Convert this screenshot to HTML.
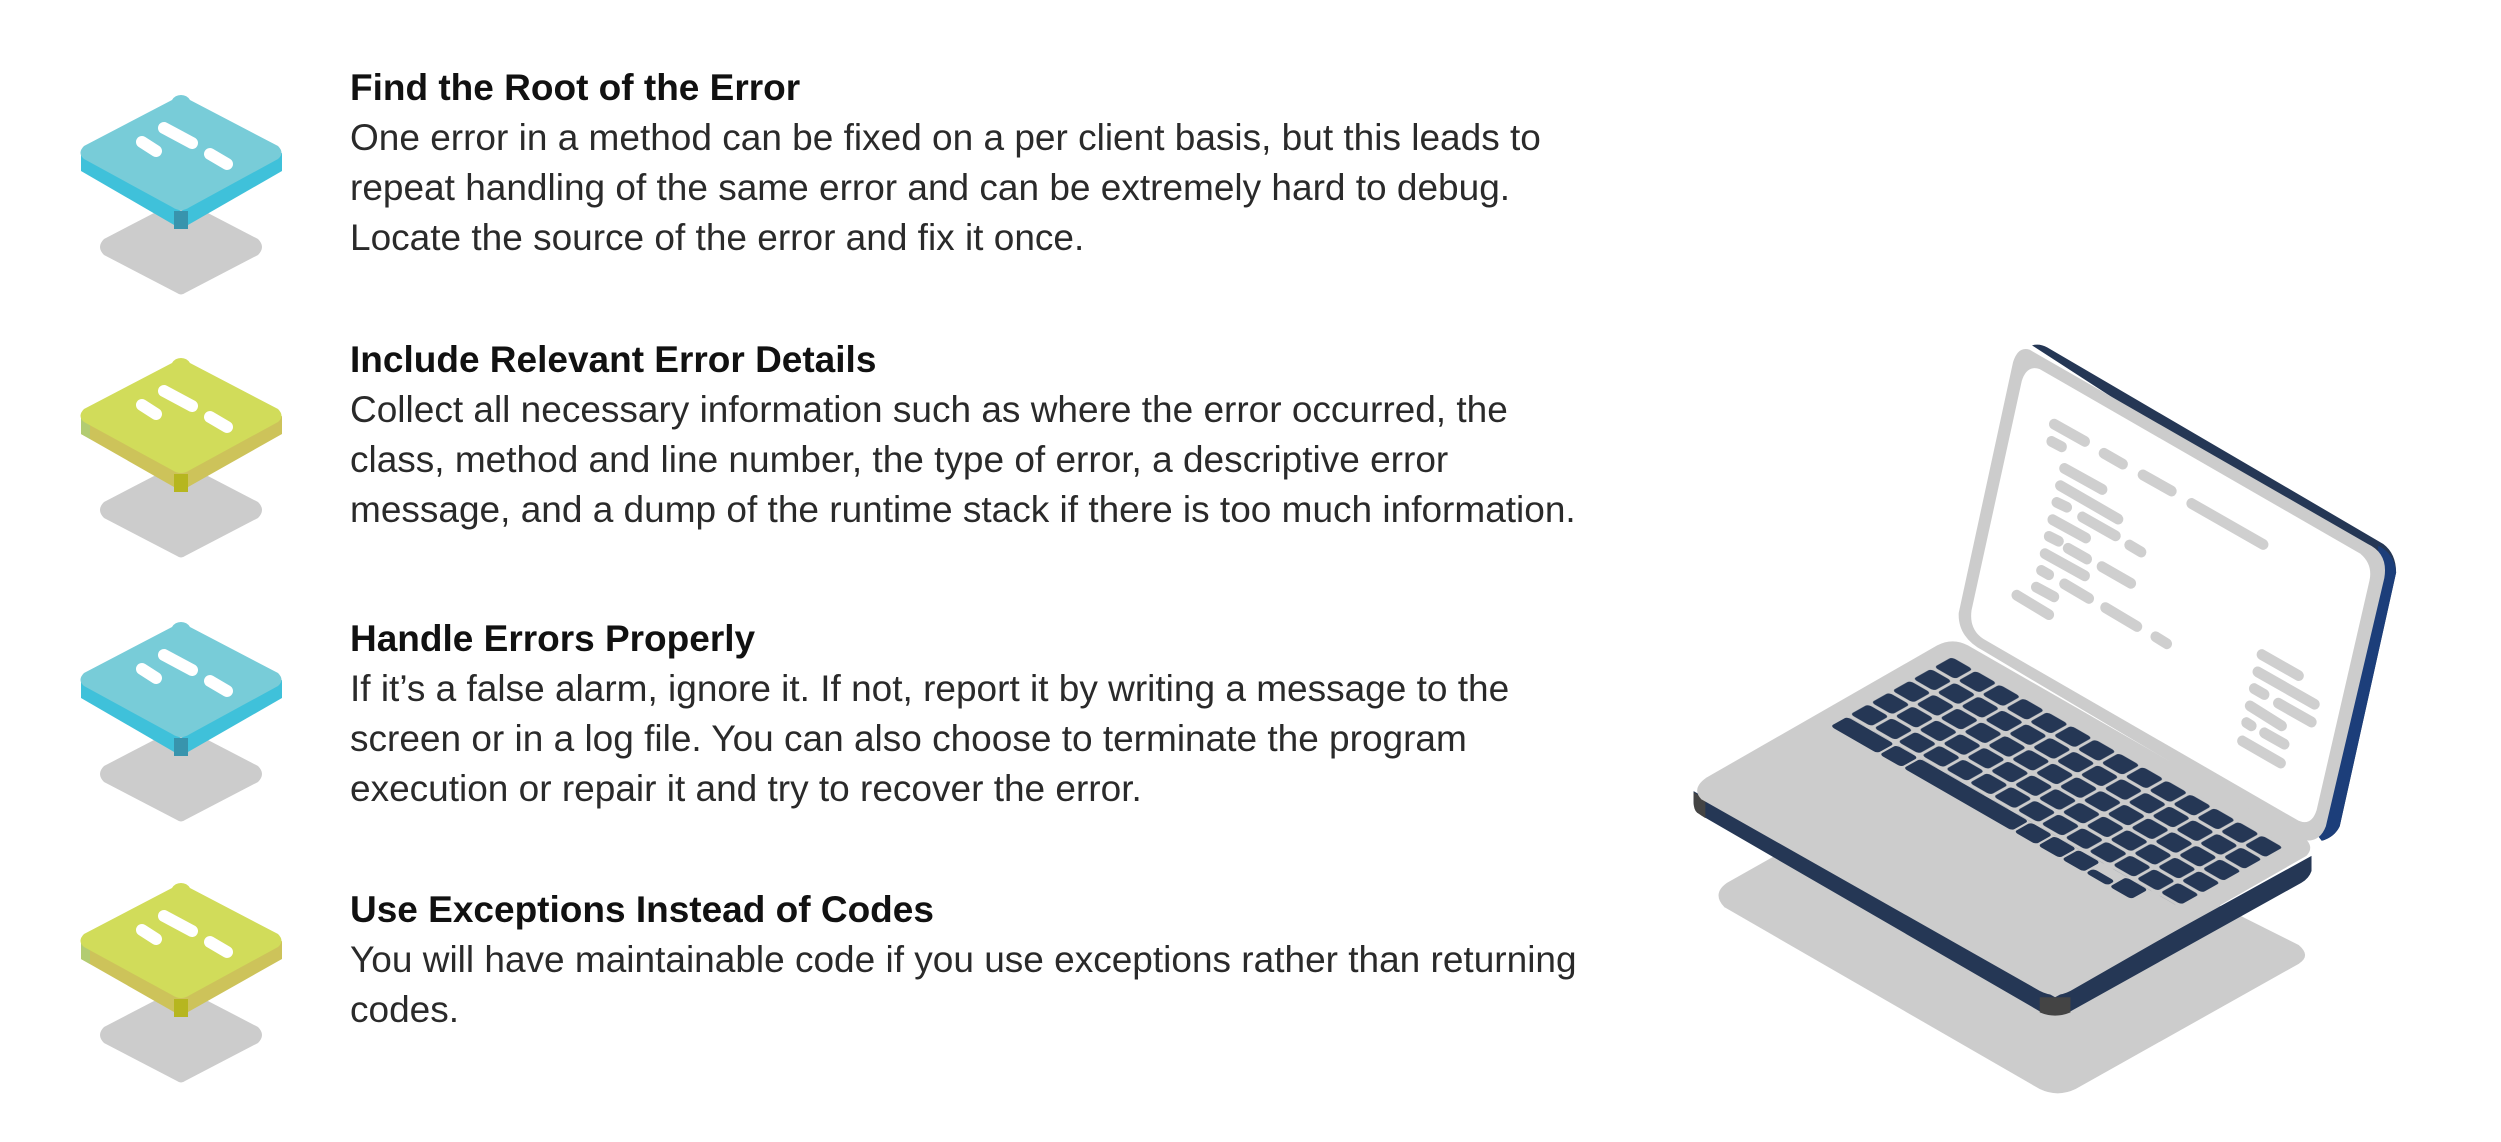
<!DOCTYPE html>
<html><head><meta charset="utf-8"><style>
html,body{margin:0;padding:0;background:#fff;}
body{width:2501px;height:1142px;position:relative;overflow:hidden;font-family:"Liberation Sans",sans-serif;}
.t{position:absolute;left:350px;font-size:37px;line-height:50px;color:#2a2a2a;letter-spacing:0;white-space:nowrap;}
.t b{display:block;font-size:37px;color:#111;letter-spacing:0;}
svg{position:absolute;left:0;top:0;}
</style></head><body>
<svg width="2501" height="1142" viewBox="0 0 2501 1142">
<defs>
<g id="blue">
 <path d="M81,58 L181,116 L181,134 L81,76 Z" fill="#3fc1da"/>
 <path d="M181,116 L282,58 L282,76 L181,134 Z" fill="#3fc1da"/>
 <rect x="174" y="116" width="14" height="18" fill="#3894ad"/>
 <path d="M181,0 Q187,0 190,5 L278,51 Q285,58 278,64 L190,112 Q181,118 172,112 L84,64 Q77,58 84,51 L172,5 Q175,0 181,0Z" fill="#78ccd8"/>
 <g stroke="#fff" stroke-width="12" stroke-linecap="round"><line x1="164" y1="33" x2="192" y2="48"/><line x1="142" y1="47" x2="156" y2="56"/><line x1="210" y1="59" x2="227" y2="69"/></g>
</g>
<g id="green">
 <path d="M81,58 L181,115 L181,133 L81,76 Z" fill="#cdc35a"/>
 <path d="M81,58 L90,63 L90,81 L81,76Z" fill="#b2cc72"/>
 <path d="M181,115 L282,58 L282,76 L181,133 Z" fill="#cdc35a"/>
 <rect x="174" y="116" width="14" height="18" fill="#b6b61f"/>
 <path d="M181,0 Q187,0 190,5 L278,51 Q285,58 278,64 L190,112 Q181,118 172,112 L84,64 Q77,58 84,51 L172,5 Q175,0 181,0Z" fill="#d1dc5a"/>
 <g stroke="#fff" stroke-width="12" stroke-linecap="round"><line x1="164" y1="33" x2="192" y2="48"/><line x1="142" y1="47" x2="156" y2="56"/><line x1="210" y1="59" x2="227" y2="69"/></g>
</g>
<path id="sh" d="M181,104 L258,144 Q266,152 258,160 L185,198 Q181,201 177,198 L104,160 Q96,152 104,144 Z" fill="#cccccc"/>
<pattern id="keys" patternUnits="userSpaceOnUse" width="6.6" height="8.1" x="3" y="47">
 <rect x="0.4" y="0.6" width="5.8" height="6.9" rx="1" fill="#253755"/>
</pattern>
</defs>
<use href="#sh" y="95"/><use href="#blue" y="95"/>
<use href="#sh" y="358"/><use href="#green" y="358"/>
<use href="#sh" y="622"/><use href="#blue" y="622"/>
<use href="#sh" y="883"/><use href="#green" y="883"/>

<g transform="translate(1650,300) scale(0.5128,0.5397)">
 <path d="M150,1080 L560,860 L1265,1195 Q1290,1215 1265,1230 L830,1462 Q795,1478 760,1462 L145,1125 Q120,1100 150,1080Z" fill="#cccccc"/>
 <path d="M85,910 L790,1292 L1290,1030 L1290,1058 Q1285,1072 1270,1080 L820,1318 Q790,1330 760,1318 L100,955 Q85,945 85,930Z" fill="#253755"/>
 <path d="M85,912 L108,925 L108,960 L92,950 Q85,945 85,930Z" fill="#444"/>
 <path d="M760,1292 L820,1292 L820,1320 Q790,1332 760,1320Z" fill="#444"/>
 <path d="M110,885 L560,640 Q590,625 620,640 L1280,1000 Q1295,1015 1280,1030 L820,1280 Q790,1295 760,1280 L100,925 Q80,905 110,885Z" fill="#cccccc"/>
 <g transform="matrix(7.05,3.85,5.05,-2.70,85,905)">
  <rect x="3" y="54.5" width="92" height="41.5" fill="url(#keys)"/>
  <rect x="3.6" y="47.8" width="13" height="6.5" rx="1" fill="#253755"/>
  <rect x="17.2" y="47.8" width="6" height="6.5" rx="1" fill="#253755"/>
  <rect x="23.8" y="47.8" width="30" height="6.5" rx="1" fill="#253755"/>
  <rect x="54.4" y="47.8" width="6" height="6.5" rx="1" fill="#253755"/>
  <rect x="61" y="47.8" width="6" height="6.5" rx="1" fill="#253755"/>
  <rect x="67.6" y="47.8" width="6" height="6.5" rx="1" fill="#253755"/>
  <rect x="74.2" y="47.8" width="6" height="3" rx="1" fill="#253755"/>
  <rect x="80.8" y="47.8" width="6" height="6.5" rx="1" fill="#253755"/>
 </g>
 <path d="M745,84 Q760,80 775,88 L1430,452 Q1455,470 1455,505 L1345,975 Q1335,995 1310,1002 L1300,990 L1420,500 Z" fill="#253755"/>
 <path d="M1420,455 Q1452,470 1455,505 L1345,975 Q1335,995 1310,1002 L1300,990 L1420,500Z" fill="#1c3e7a"/>
 <path d="M740,92 L1400,452 Q1440,470 1432,515 L1318,975 Q1305,1008 1270,1000 L650,650 Q600,625 602,580 L708,115 Q718,85 740,92Z" fill="#cccccc"/>
 <path d="M760,128 L1385,470 Q1410,490 1403,520 L1300,945 Q1290,975 1265,965 L650,628 Q622,610 627,575 L725,150 Q735,120 760,128Z" fill="#ffffff"/>
 <g stroke="#cfcfcf" stroke-width="20" stroke-linecap="round" fill="none">
  <line x1="788" y1="230" x2="848" y2="262"/><line x1="783" y1="262" x2="803" y2="272"/>
  <line x1="885" y1="284" x2="922" y2="304"/><line x1="961" y1="324" x2="1017" y2="354"/>
  <line x1="1056" y1="377" x2="1196" y2="453"/><line x1="808" y1="312" x2="882" y2="351"/>
  <line x1="800" y1="344" x2="913" y2="406"/><line x1="793" y1="375" x2="813" y2="384"/>
  <line x1="843" y1="402" x2="908" y2="437"/><line x1="785" y1="407" x2="850" y2="441"/>
  <line x1="778" y1="438" x2="797" y2="447"/><line x1="815" y1="460" x2="852" y2="480"/>
  <line x1="935" y1="454" x2="958" y2="467"/><line x1="770" y1="470" x2="848" y2="511"/>
  <line x1="881" y1="494" x2="938" y2="525"/><line x1="763" y1="501" x2="778" y2="509"/>
  <line x1="753" y1="532" x2="788" y2="550"/><line x1="808" y1="526" x2="856" y2="553"/>
  <line x1="715" y1="547" x2="778" y2="583"/><line x1="888" y1="570" x2="950" y2="605"/>
  <line x1="986" y1="624" x2="1008" y2="637"/>
  <line x1="1193" y1="657" x2="1265" y2="696"/><line x1="1185" y1="689" x2="1296" y2="749"/>
  <line x1="1178" y1="720" x2="1198" y2="731"/><line x1="1225" y1="747" x2="1290" y2="782"/>
  <line x1="1170" y1="752" x2="1232" y2="789"/><line x1="1163" y1="783" x2="1173" y2="789"/>
  <line x1="1198" y1="802" x2="1237" y2="823"/><line x1="1155" y1="817" x2="1230" y2="858"/>
 </g>
</g>
</svg>

<div class="t" style="top:63px"><b>Find the Root of the Error</b>One error in a method can be fixed on a per client basis, but this leads to<br>repeat handling of the same error and can be extremely hard to debug.<br>Locate the source of the error and fix it once.</div>
<div class="t" style="top:335px"><b>Include Relevant Error Details</b>Collect all necessary information such as where the error occurred, the<br>class, method and line number, the type of error, a descriptive error<br>message, and a dump of the runtime stack if there is too much information.</div>
<div class="t" style="top:614px"><b>Handle Errors Properly</b>If it’s a false alarm, ignore it. If not, report it by writing a message to the<br>screen or in a log file. You can also choose to terminate the program<br>execution or repair it and try to recover the error.</div>
<div class="t" style="top:885px"><b>Use Exceptions Instead of Codes</b>You will have maintainable code if you use exceptions rather than returning<br>codes.</div>
</body></html>
